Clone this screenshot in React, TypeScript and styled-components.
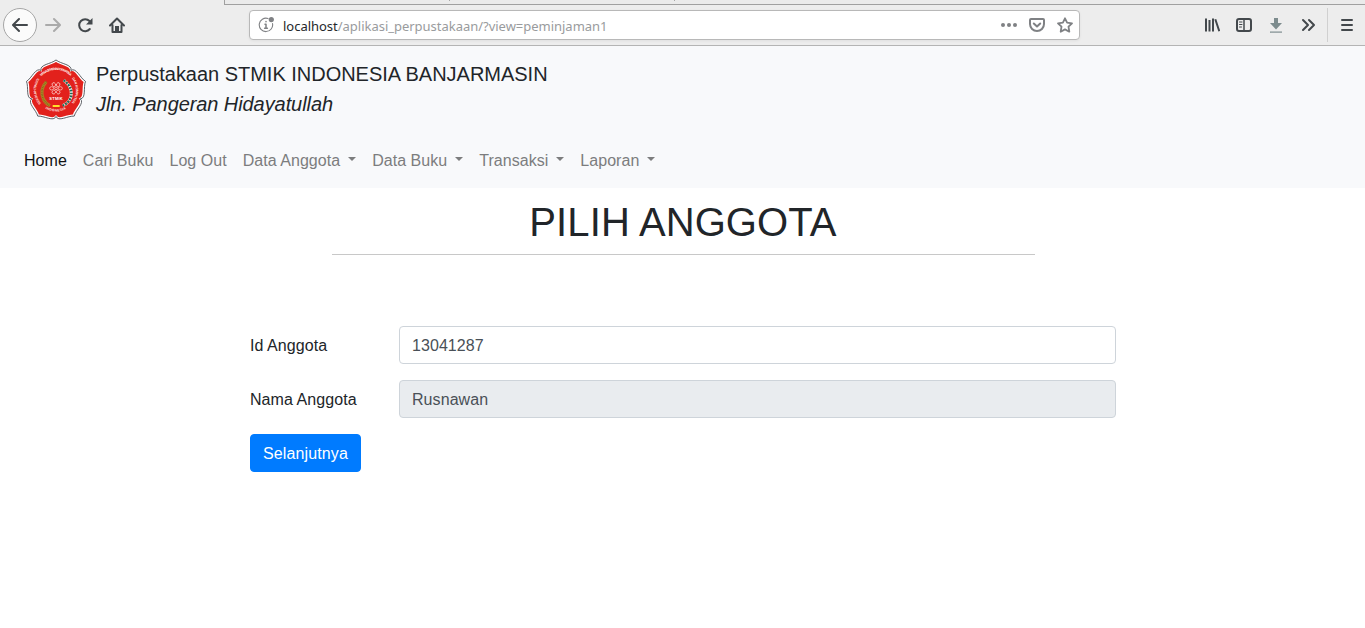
import React from 'react';
import styled, { createGlobalStyle, css } from 'styled-components';

const GlobalStyle = createGlobalStyle`
  *, *::before, *::after { box-sizing: border-box; }
  body {
    margin: 0;
    background: #fff;
    color: #212529;
    font-family: "Liberation Sans", Arial, sans-serif;
    font-size: 16px;
    line-height: 1.5;
  }
`;

const Page = styled.div`
  min-height: 628px;
  overflow: hidden;
`;

/* ---------- browser chrome ---------- */

const Chrome = styled.header`
  height: 46px;
  background: #ededed;
  border-bottom: 1px solid #b4b4b4;
`;

const TabStrip = styled.div`
  display: flex;
  height: 5px;
  margin-left: 224px;
  padding-left: 224px;
  gap: 224px;
  background: #ebebeb;
  border-left: 1px solid #a0a0a0;
  border-bottom: 1px solid #a0a0a0;
`;

const TabMark = styled.span`
  width: 1px;
  height: 1px;
  background: #a8a8a8;
`;

const Toolbar = styled.div`
  display: flex;
  align-items: center;
  height: 40px;
  color: #43484c;
`;

const ToolButton = styled.span<{ $muted?: boolean }>`
  display: flex;
  align-items: center;
  justify-content: center;
  width: 32px;
  height: 32px;
  color: ${(p) => (p.$muted ? '#aaaaaa' : '#43484c')};
`;

const BackButton = styled(ToolButton)`
  width: 34px;
  height: 34px;
  margin: 0 0 0 3px;
  border: 1px solid #a6a6a6;
  border-radius: 50%;
  background: #fbfbfb;
`;

const UrlBar = styled.div`
  display: flex;
  align-items: center;
  width: 831px;
  height: 30px;
  margin-left: 116px;
  padding: 0 6px 0 8px;
  background: #fff;
  border: 1px solid #b8b8b8;
  border-radius: 4px;
  box-shadow: 0 1px 3px rgba(0, 0, 0, 0.06);
  color: #7f8184;
`;

const Url = styled.span`
  flex: 1;
  margin-left: 9px;
  font: 13px/20px "Noto Sans", sans-serif;
  letter-spacing: -0.02px;
  padding-top: 2px;
  color: #999b9d;
`;

const UrlHost = styled.span`
  color: #25282b;
`;

const UrlActions = styled.span`
  display: flex;
  align-items: center;
  gap: 12px;
`;

const ToolGroup = styled.div`
  display: flex;
  margin-left: 116px;
`;

const MenuArea = styled.div`
  display: flex;
  align-items: center;
  justify-content: center;
  width: 38px;
  height: 34px;
  margin-left: 3px;
  border-left: 1px solid #d0d0d0;
`;

/* ---------- site header ---------- */

const Navbar = styled.nav`
  height: 142px;
  padding: 13px 16px 8px;
  background: #f8f9fb;
`;

const Brand = styled.div`
  display: flex;
  align-items: flex-start;
  gap: 10px;
  height: 60px;
  margin-left: 10px;
  font-size: 20px;
  line-height: 30px;
  letter-spacing: -0.02px;
  white-space: nowrap;
`;

const Address = styled.em`
  display: block;
  letter-spacing: -0.08px;
`;

const NavList = styled.ul`
  display: flex;
  list-style: none;
  margin: 22px 0 0;
  padding: 0;
`;

const NavItem = styled.li<{ $active?: boolean; $dropdown?: boolean }>`
  padding: 8px;
  line-height: 24px;
  letter-spacing: 0.04px;
  white-space: nowrap;
  color: ${(p) => (p.$active ? '#111213' : '#7c7d7e')};
  ${(p) =>
    p.$dropdown &&
    css`
      &::after {
        content: '';
        display: inline-block;
        margin-left: 8px;
        vertical-align: 5px;
        border-top: 4.8px solid;
        border-left: 4.8px solid transparent;
        border-right: 4.8px solid transparent;
      }
    `}
`;

/* ---------- content ---------- */

const Title = styled.h1`
  margin: 10px 0 8px;
  padding-left: 1px;
  font-size: 40px;
  font-weight: 400;
  line-height: 48px;
  letter-spacing: 0.1px;
  text-align: center;
`;

const Rule = styled.hr`
  width: 703px;
  height: 1px;
  margin: 0 0 0 332px;
  border: 0;
  background: #c8c8c8;
`;

const Form = styled.form`
  width: 866px;
  margin: 71px 0 0 250px;
  letter-spacing: 0.07px;
`;

const FormRow = styled.div`
  display: grid;
  grid-template-columns: 149px 717px;
  align-items: center;
  height: 38px;
  margin-bottom: 16px;
`;

const Label = styled.label`
  padding-top: 2px;
`;

const Input = styled.input`
  width: 100%;
  height: 38px;
  padding: 8px 12px 6px;
  border: 1px solid #ced4da;
  border-radius: 4px;
  background: #fff;
  color: #495057;
  font: inherit;
  letter-spacing: inherit;
  &:read-only {
    background: #e9ecef;
  }
`;

const SubmitButton = styled.button`
  display: block;
  width: 111px;
  height: 38px;
  padding: 7px 0 5px;
  border: 1px solid #007bff;
  border-radius: 4px;
  background: #007bff;
  color: #fff;
  font: inherit;
  letter-spacing: 0.12px;
`;

/* ---------- drawings ---------- */

const Icon = ({ children, size = 16, width = 2 }: { children: React.ReactNode; size?: number; width?: number }) => (
  <svg
    width={size}
    height={size}
    viewBox="0 0 16 16"
    fill="none"
    stroke="currentColor"
    strokeWidth={width}
    strokeLinecap="round"
    strokeLinejoin="round"
  >
    {children}
  </svg>
);

const polar = (r: number, deg: number) => {
  const a = ((deg - 90) * Math.PI) / 180;
  return `${(90 + r * Math.cos(a)).toFixed(1)} ${(96 + r * Math.sin(a)).toFixed(1)}`;
};

const flower = (s: number) =>
  `M${polar(77 * s, -36)}` +
  [0, 72, 144, 216, 288]
    .map(
      (t) =>
        `C${polar(95 * s, t - 32)} ${polar(83 * s, t - 10)} ${polar(94 * s, t)}` +
        `C${polar(83 * s, t + 10)} ${polar(95 * s, t + 32)} ${polar(77 * s, t + 36)}`,
    )
    .join('') +
  'Z';

const Logo = () => (
  <svg width="60" height="60" viewBox="0 0 180 180" overflow="visible">
    <defs>
      <path id="ringLeft" d="M45 133A60 60 0 0 1 42 58" />
      <path id="ringTop" d="M46 52A60 60 0 0 1 134 52" />
      <path id="ringRight" d="M138 58A60 60 0 0 1 135 133" />
      <path id="ringLow" d="M58 149A66 66 0 0 0 122 149" />
    </defs>
    <path d={flower(0.99)} fill="#fff" stroke="#3d4148" strokeWidth="2.5" strokeLinejoin="round" />
    <path d={flower(0.93)} fill="#e2211c" />
    <g fill="#ffe9e6" fontSize="10" fontWeight="700">
      <text>
        <textPath href="#ringLeft" textLength="78">SEKOLAH TINGGI</textPath>
      </text>
      <text>
        <textPath href="#ringTop" textLength="98">MANAJEMEN INFORMATIKA</textPath>
      </text>
      <text>
        <textPath href="#ringRight" textLength="78">DAN KOMPUTER</textPath>
      </text>
      <text>
        <textPath href="#ringLow" textLength="64">INDONESIA</textPath>
      </text>
    </g>
    <path d="M61 68Q40 91 52 120Q58 133 72 140" fill="none" stroke="#ab8425" strokeWidth="9" />
    <path d="M61 68Q40 91 52 120Q58 133 72 140" fill="none" stroke="#80651b" strokeWidth="5" strokeDasharray="2 3" />
    <path d="M113 64Q142 84 134 116Q128 132 110 140" fill="none" stroke="#f2f5f2" strokeWidth="9" strokeDasharray="6 2" />
    <path d="M113 64Q142 84 134 116Q128 132 110 140" fill="none" stroke="#176c56" strokeWidth="7" strokeDasharray="5 4" />
    <g fill="none" stroke="#fbc0bb" strokeWidth="2.5">
      {[0, 60, 120, 180, 240, 300].map((a) => (
        <ellipse key={a} cx="90" cy="75" rx="5" ry="6" transform={`rotate(${a + 30} 90 88)`} />
      ))}
      <circle cx="90" cy="88" r="4" />
    </g>
    <text x="90" y="124" fill="#fff" fontSize="12" fontWeight="700" textAnchor="middle" textLength="40">
      STMIK
    </text>
    <path d="M80 138h21v6H80z" fill="#ffe02a" />
  </svg>
);

const menu = [
  { label: 'Home', active: true },
  { label: 'Cari Buku' },
  { label: 'Log Out' },
  { label: 'Data Anggota', dropdown: true },
  { label: 'Data Buku', dropdown: true },
  { label: 'Transaksi', dropdown: true },
  { label: 'Laporan', dropdown: true },
];

export default function App() {
  return (
    <Page>
      <GlobalStyle />
      <Chrome>
        <TabStrip>
          <TabMark />
          <TabMark />
        </TabStrip>
        <Toolbar>
          <BackButton>
            <Icon>
              <path d="M15 8H1.500M7 2L1 8l6 6" />
            </Icon>
          </BackButton>
          <ToolButton $muted>
            <Icon>
              <path d="M1 8h13.500M9 2l6 6-6 6" />
            </Icon>
          </ToolButton>
          <ToolButton>
            <Icon>
              <path d="M12.800 12A6 6 0 1 1 12.500 4L13.500 5" />
              <path d="M15.500 1v6.500H9z" fill="currentColor" stroke="none" />
            </Icon>
          </ToolButton>
          <ToolButton>
            <Icon>
              <path d="M1 8.500L8 1.500l7 7M3.500 8v7h9V8" />
              <path d="M6 14V9h4v5z" fill="currentColor" stroke="none" />
            </Icon>
          </ToolButton>
          <UrlBar>
            <Icon width={1.1}>
              <path d="M10 1.500A6.700 6.700 0 1 0 14.500 6.500" />
              <circle cx="13.300" cy="2.600" r="2.600" fill="currentColor" stroke="none" />
              <path d="M7 7.200H8V11M6.600 11.300h2.800M8 4.500v.2" strokeWidth="1.500" />
            </Icon>
            <Url>
              <UrlHost>localhost</UrlHost>/aplikasi_perpustakaan/?view=peminjaman1
            </Url>
            <UrlActions>
              <Icon>
                <g fill="currentColor" stroke="none">
                  <circle cx="2" cy="8" r="2" />
                  <circle cx="8" cy="8" r="2" />
                  <circle cx="14" cy="8" r="2" />
                </g>
              </Icon>
              <Icon>
                <path d="M2 2h12a1 1 0 0 1 1 1v4a7 7 0 0 1-14 0V3a1 1 0 0 1 1-1z" />
                <path d="M4.800 6.500L8 9.500l3.200-3" />
              </Icon>
              <Icon width={1.8}>
                <path d="M8 1.300l2.100 4.300 4.900.7-3.500 3.400.8 5L8 12.400l-4.300 2.300.8-5L1 6.300l4.900-.7z" />
              </Icon>
            </UrlActions>
          </UrlBar>
          <ToolGroup>
            <ToolButton>
              <Icon>
                <path d="M2 1.500v13M5.500 3v11.500M9 1.500v13M11.300 2.300l4 12" strokeLinecap="butt" />
              </Icon>
            </ToolButton>
            <ToolButton>
              <Icon>
                <rect x="1" y="2" width="14" height="12" rx="2" />
                <path d="M8 2v12" strokeWidth="1.500" />
                <path d="M3.500 5h2.500M3.500 7.500h2.500M3.500 10h2" strokeWidth="1" />
              </Icon>
            </ToolButton>
            <ToolButton>
              <Icon>
                <g fill="#7d8c8e" stroke="none">
                  <path d="M6 1h4v5h4l-6 6.500L2 6h4z" />
                  <path d="M2 14.500h12v1.200H2z" />
                </g>
              </Icon>
            </ToolButton>
            <ToolButton>
              <Icon>
                <path d="M3 3l5 5-5 5M9 3l5 5-5 5" />
              </Icon>
            </ToolButton>
          </ToolGroup>
          <MenuArea>
            <Icon>
              <path d="M3 3h10M3 8h10M3 13h10" />
            </Icon>
          </MenuArea>
        </Toolbar>
      </Chrome>

      <Navbar>
        <Brand>
          <Logo />
          <div>
            Perpustakaan STMIK INDONESIA BANJARMASIN
            <Address>Jln. Pangeran Hidayatullah</Address>
          </div>
        </Brand>
        <NavList>
          {menu.map((item) => (
            <NavItem key={item.label} $active={item.active} $dropdown={item.dropdown}>
              {item.label}
            </NavItem>
          ))}
        </NavList>
      </Navbar>

      <main>
        <Title>PILIH ANGGOTA</Title>
        <Rule />
        <Form>
          <FormRow>
            <Label htmlFor="id">Id Anggota</Label>
            <Input id="id" defaultValue="13041287" />
          </FormRow>
          <FormRow>
            <Label htmlFor="nama">Nama Anggota</Label>
            <Input id="nama" defaultValue="Rusnawan" readOnly />
          </FormRow>
          <SubmitButton type="button">Selanjutnya</SubmitButton>
        </Form>
      </main>
    </Page>
  );
}
